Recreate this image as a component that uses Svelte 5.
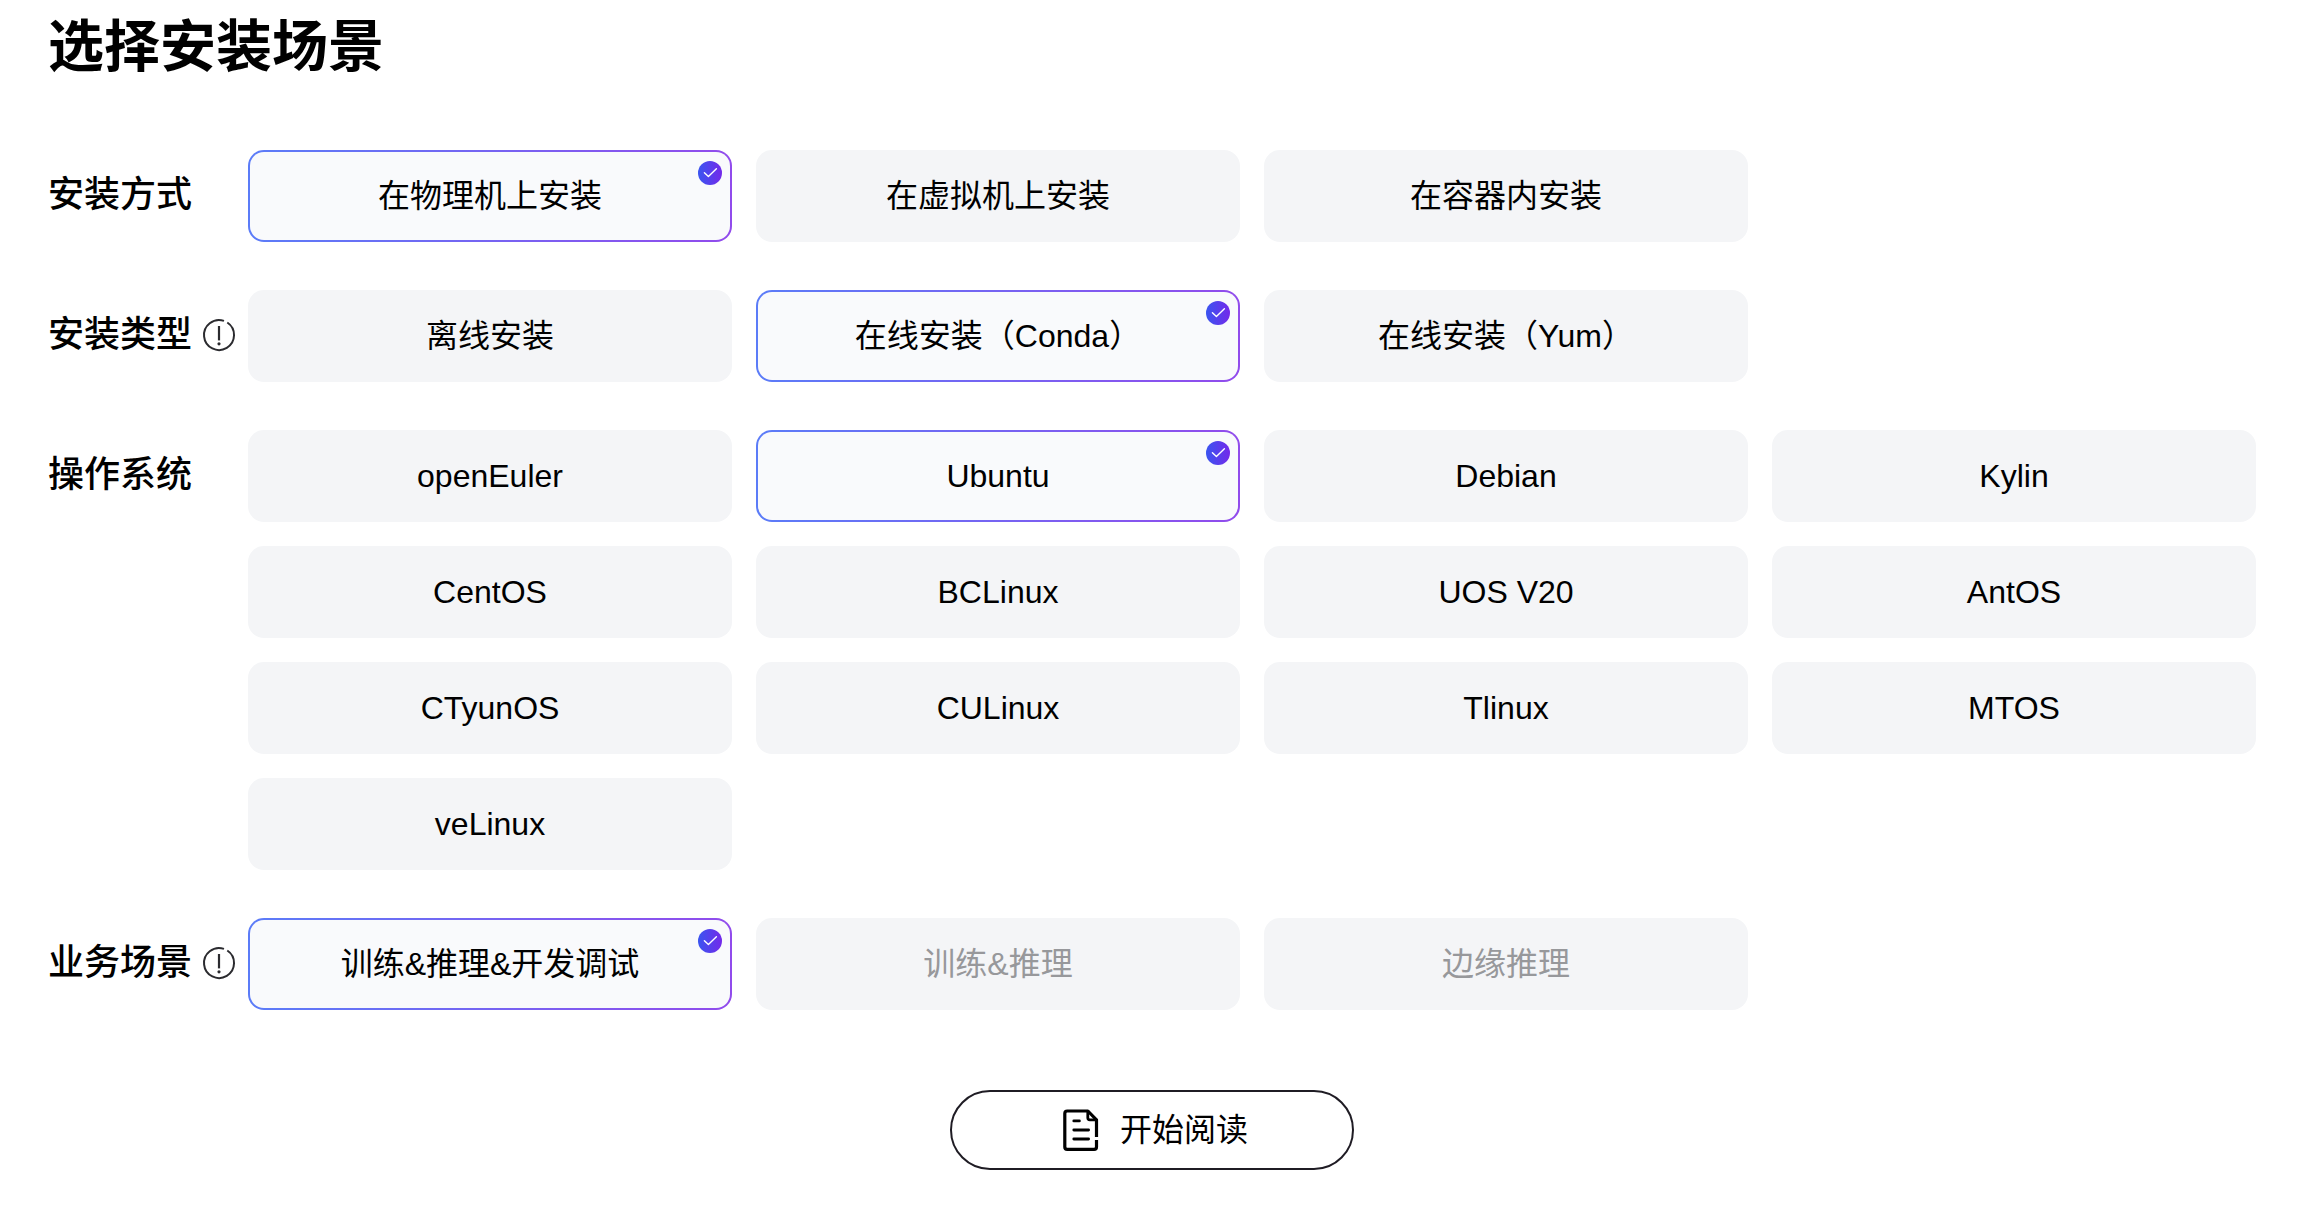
<script>
  const groups = [
    {
      id: 'method',
      label: '安装方式',
      options: ['在物理机上安装', '在虚拟机上安装', '在容器内安装']
    },
    {
      id: 'type',
      label: '安装类型',
      tip: true,
      options: ['离线安装', '在线安装（Conda）', '在线安装（Yum）']
    },
    {
      id: 'os',
      label: '操作系统',
      options: [
        'openEuler', 'Ubuntu', 'Debian', 'Kylin',
        'CentOS', 'BCLinux', 'UOS V20', 'AntOS',
        'CTyunOS', 'CULinux', 'Tlinux', 'MTOS',
        'veLinux'
      ]
    },
    {
      id: 'scene',
      label: '业务场景',
      tip: true,
      options: ['训练&推理&开发调试', '训练&推理', '边缘推理'],
      disabled: ['训练&推理', '边缘推理']
    }
  ];

  let selected = $state({
    method: '在物理机上安装',
    type: '在线安装（Conda）',
    os: 'Ubuntu',
    scene: '训练&推理&开发调试'
  });
</script>

<main class="page">
  <h1>选择安装场景</h1>

  <div class="groups">
    {#each groups as group (group.id)}
      <section class="group" aria-labelledby="label-{group.id}">
        <div class="group-head">
          <h2 id="label-{group.id}">{group.label}</h2>
          {#if group.tip}
            <svg class="tip" viewBox="0 0 38 38" fill="none" stroke="#2b2b2f" stroke-width="2" aria-hidden="true">
              <path d="M24 4.86A15 15 0 1 0 27.3 6.5" />
              <path stroke-width="2.2" d="M19 10v14.4" />
              <circle cx="19" cy="27.8" r="1.6" fill="#2b2b2f" stroke="none" />
            </svg>
          {/if}
        </div>

        <div class="options">
          {#each group.options as option (option)}
            <button
              type="button"
              class="option"
              class:active={selected[group.id] === option}
              aria-pressed={selected[group.id] === option}
              disabled={group.disabled?.includes(option)}
              onclick={() => (selected[group.id] = option)}
            >
              {option}
              {#if selected[group.id] === option}
                <span class="badge">
                  <svg viewBox="0 0 24 24" fill="none" stroke="#fff" stroke-width="1.4" stroke-linecap="round" stroke-linejoin="round" aria-hidden="true">
                    <path d="M6.4 11.7L10.4 15.5L18.4 7.7" />
                  </svg>
                </span>
              {/if}
            </button>
          {/each}
        </div>
      </section>
    {/each}
  </div>

  <button type="button" class="start">
    <svg viewBox="0 0 48 48" fill="none" stroke="#000" stroke-width="3.2" stroke-linecap="round" stroke-linejoin="round" aria-hidden="true">
      <path stroke-linecap="butt" d="M40.5 31V13.8L31.9 5H11.2Q8.8 5 8.8 7.4V41Q8.8 43.4 11.2 43.4H38.1Q40.5 43.4 40.5 41V34" />
      <path stroke-width="2.8" d="M31.8 5.5V11.8Q31.8 13.8 33.8 13.8H40" />
      <path stroke-width="2.8" d="M17.8 14.9H23.4M17.8 24H32.6M17.8 33H32.6" />
    </svg>
    开始阅读
  </button>
</main>

<style>
  :global(body) {
    margin: 0;
    background: #fff;
  }

  .page {
    display: flex;
    flex-direction: column;
    padding: 6px 58px 40px 48px;
    color: #000;
    font-family: 'Liberation Sans', 'Noto Sans CJK SC', sans-serif;
  }

  h1 {
    margin: 0 0 62px;
    font-size: 56px;
    font-weight: 600;
    line-height: 82px;
  }

  .groups {
    display: flex;
    flex-direction: column;
    gap: 48px;
  }

  .group {
    display: flex;
    align-items: flex-start;
  }

  .group-head {
    display: flex;
    flex: 0 0 200px;
    align-items: center;
    gap: 8px;
    height: 90px;
  }

  h2 {
    margin: 0;
    font-size: 36px;
    font-weight: 500;
    line-height: 54px;
  }

  .tip {
    width: 38px;
    height: 38px;
  }

  .options {
    display: grid;
    flex: 1;
    grid-template-columns: repeat(4, minmax(0, 1fr));
    gap: 24px;
  }

  .option {
    position: relative;
    padding: 20px 24px;
    border: 2px solid transparent;
    border-radius: 16px;
    background: #f4f5f7;
    color: #000;
    font-family: inherit;
    font-size: 32px;
    line-height: 48px;
    cursor: pointer;
  }

  .option.active {
    background:
      linear-gradient(#f9fafc, #f9fafc) padding-box,
      linear-gradient(90deg, #5b7cf8, #914bec) border-box;
  }

  .option:disabled {
    color: #97989b;
    cursor: not-allowed;
  }

  .badge {
    position: absolute;
    top: 9px;
    right: 8px;
    width: 24px;
    height: 24px;
    border-radius: 50%;
    background: linear-gradient(90deg, #3a55f0, #7429ea);
  }

  .badge svg {
    display: block;
  }

  .start {
    display: flex;
    align-items: center;
    align-self: center;
    justify-content: center;
    gap: 16px;
    min-width: 404px;
    margin-top: 80px;
    padding: 14px 40px;
    border: 2px solid #1f1c24;
    border-radius: 40px;
    background: #fff;
    color: #000;
    font-family: inherit;
    font-size: 32px;
    line-height: 48px;
    cursor: pointer;
  }

  .start svg {
    width: 48px;
    height: 48px;
  }
</style>
